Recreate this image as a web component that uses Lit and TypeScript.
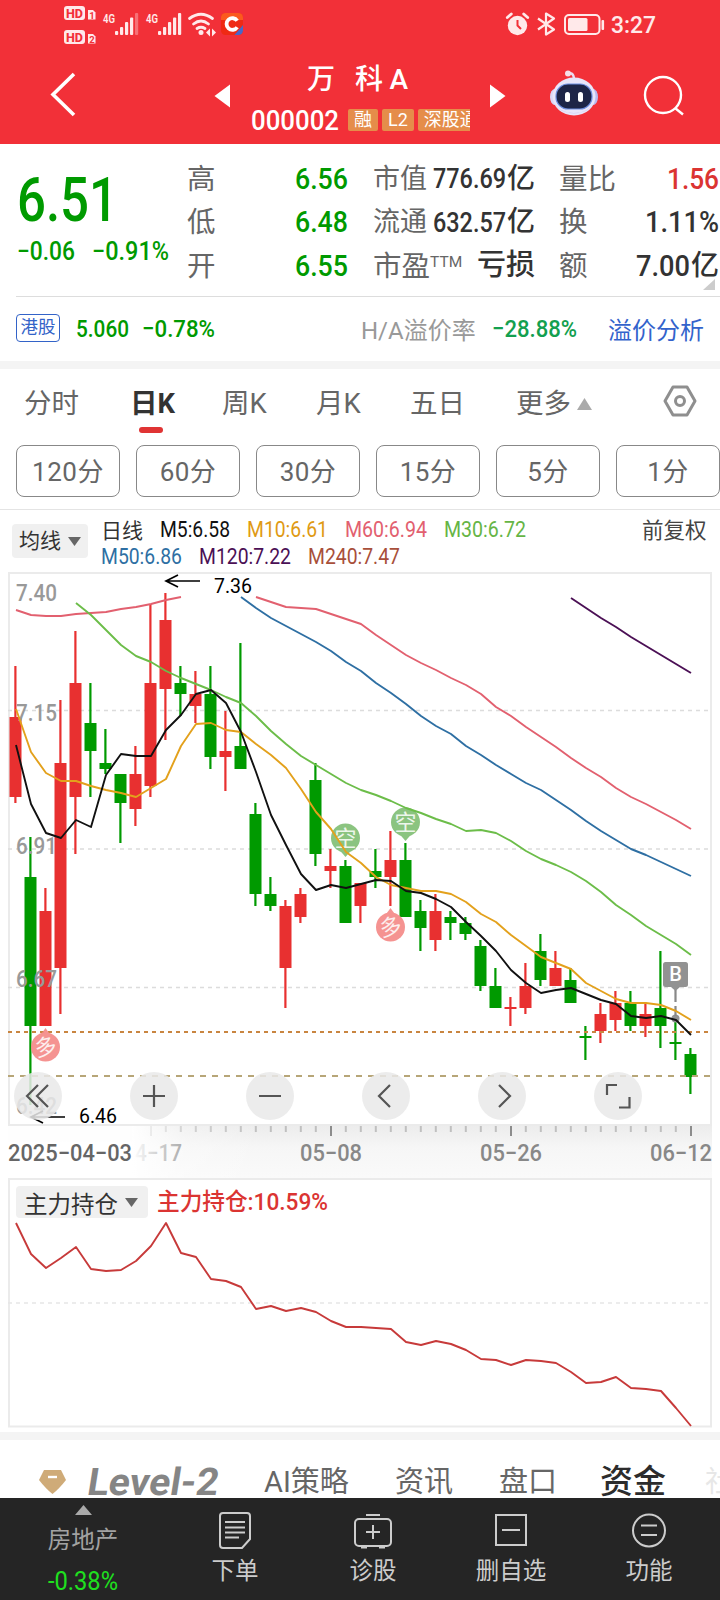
import { LitElement, html, svg, css } from "lit";
import { customElement } from "lit/decorators.js";

/* [up?, high, bodyTop, bodyBottom, low] in page pixels, one entry per trading day */
type Candle = [number, number, number, number, number];
const candles: Candle[] = [
  [1, 666, 717, 797, 803], [0, 837, 877, 1026, 1105], [1, 888, 911, 1026, 1026], [1, 700, 763, 968, 1014],
  [1, 631, 683, 797, 854], [0, 683, 723, 751, 797], [0, 729, 763, 769, 774], [0, 774, 774, 803, 843],
  [1, 746, 774, 809, 826], [1, 604, 683, 786, 797], [1, 593, 620, 689, 740], [0, 666, 683, 694, 716],
  [1, 671, 694, 706, 723], [0, 666, 694, 757, 769], [1, 711, 751, 757, 791], [0, 643, 746, 769, 769],
  [0, 803, 814, 894, 906], [0, 877, 894, 906, 911], [1, 900, 906, 968, 1008], [1, 888, 894, 917, 923],
  [0, 763, 780, 854, 866], [1, 849, 866, 871, 888], [0, 860, 866, 923, 923], [1, 883, 883, 906, 923],
  [0, 849, 871, 877, 888], [1, 831, 860, 877, 906], [0, 843, 860, 917, 917], [0, 900, 911, 928, 951],
  [1, 894, 911, 940, 951], [0, 911, 917, 923, 940], [0, 917, 923, 934, 940], [0, 940, 946, 986, 991],
  [0, 968, 986, 1008, 1008], [1, 997, 1007, 1009, 1026], [1, 963, 986, 1008, 1014], [0, 934, 951, 980, 986],
  [1, 951, 968, 986, 986], [0, 968, 980, 1003, 1003], [0, 1026, 1036, 1038, 1060], [1, 1003, 1014, 1031, 1043],
  [1, 991, 1003, 1020, 1031], [0, 991, 1003, 1026, 1031], [1, 1003, 1014, 1026, 1037], [0, 951, 1008, 1026, 1048],
  [0, 1018, 1042, 1044, 1060], [0, 1048, 1054, 1077, 1094],
];

const m5 = [745, 804, 833, 838, 820, 827, 775, 754, 756, 756, 730, 715, 694, 690, 703, 732, 772, 815, 845, 874, 890, 885, 888, 884, 880, 881, 891, 893, 899, 907, 922, 936, 951, 970, 983, 993, 990, 988, 994, 1000, 1004, 1016, 1018, 1016, 1020, 1035];
const m10 = [709, 752, 773, 781, 781, 786, 790, 793, 797, 788, 779, 746, 724, 723, 730, 732, 744, 755, 768, 789, 812, 829, 852, 863, 877, 885, 888, 891, 891, 894, 902, 914, 922, 935, 946, 957, 963, 969, 983, 991, 999, 1003, 1003, 1005, 1011, 1020];
const m30 = [603, 615, 630, 645, 656, 662, 671, 678, 684, 690, 697, 703, 716, 731, 744, 756, 765, 774, 783, 790, 795, 801, 808, 813, 819, 824, 831, 830, 833, 841, 851, 859, 865, 872, 881, 892, 905, 915, 926, 935, 944, 955];
const m60a = [610, 615, 616, 616, 614, 613, 612, 609, 607, 604, 600, 597];
const m60b = [597, 602, 607, 608, 609, 614, 619, 624, 635, 645, 655, 663, 670, 678, 685, 694, 707, 716, 727, 737, 747, 758, 768, 777, 788, 797, 804, 812, 820, 829];
const m50 = [597, 608, 618, 626, 634, 642, 651, 662, 671, 683, 693, 704, 716, 726, 734, 746, 755, 765, 774, 783, 790, 800, 810, 821, 831, 840, 849, 855, 862, 869, 876];
const m120 = [598, 608, 618, 627, 637, 646, 655, 664, 673];
const holding = [1223, 1254, 1268, 1258, 1247, 1269, 1271, 1270, 1261, 1246, 1223, 1253, 1257, 1279, 1281, 1287, 1309, 1306, 1311, 1308, 1312, 1321, 1327, 1327, 1328, 1329, 1342, 1345, 1341, 1344, 1350, 1359, 1360, 1365, 1360, 1361, 1363, 1372, 1383, 1382, 1377, 1388, 1389, 1391, 1408, 1426];

const path = (ys: number[], from = 0) => ys.map((y, i) => `${16 + 15 * (i + from)},${y}`).join(" ");

const fit = (text: string, w: number, size: number, cls = "") => html`<svg
  class="fit ${cls}" width=${w} height=${size}><text x="0" y=${size / 2 + size * 0.356}
  font-size=${size} textLength=${w} lengthAdjust="spacingAndGlyphs">${text}</text></svg>`;

@customElement("status-bar")
class StatusBar extends LitElement {
  static styles = css`
    :host { display: block; height: 48px; }
    svg { display: block; }
    text { font-family: Roboto, sans-serif; }
  `;
  render() {
    const bars = (x: number, dim: boolean) => [0, 1, 2, 3, 4].map(
      (i) => svg`<rect x=${x + i * 5} y=${[31, 27, 22, 17.5, 13][i]} width="3.2" height=${[4, 8, 13, 17.5, 22][i]} rx="1" fill="#ffe9ea" opacity=${dim && i === 4 ? 0.35 : 1}/>`);
    return html`<svg width="720" height="48" fill="#ffe9ea">
      ${[6, 30].map((y, i) => svg`
        <rect x="64" y=${y} width="21" height="14" rx="3"/>
        <text x="66" y=${y + 11.6} font-size="13" font-weight="800" fill="#f23038" textLength="17" lengthAdjust="spacingAndGlyphs">HD</text>
        <path d=${`M88 ${y + 4}h5l2.500 2.500v7h-7.500z`}/>
        <text x="89.200" y=${y + 12.500} font-size="9.500" font-weight="700" fill="#f23038">${i + 1}</text>`)}
      <text x="103" y="22.500" font-size="13" font-weight="600" textLength="12" lengthAdjust="spacingAndGlyphs">4G</text>
      ${bars(115, true)}
      <text x="146" y="22.500" font-size="13" font-weight="600" textLength="12" lengthAdjust="spacingAndGlyphs">4G</text>
      ${bars(158, false)}
      <g fill="none" stroke="#ffe9ea" stroke-width="2.800" stroke-linecap="round">
        <path d="M189.500 18.500Q201 10 212.500 18.500M193.500 24Q201 18 208.500 24M197 28.500Q201 26 205 28.500"/>
      </g>
      <circle cx="201" cy="32.500" r="2.500"/>
      <path d="M210 28.500v8l-4-4zM212 28.500v8l4-4z"/>
      <rect x="221" y="13" width="22" height="22" rx="4.500" fill="#ef2a14"/>
      <path d="M221 20v-2.500a4.500 4.500 0 0 1 4.500-4.500h13a4.500 4.500 0 0 1 4.500 4.500v2.500z" fill="#fb5a1e"/>
      <path d="M243 25v5.500a4.500 4.500 0 0 1-4.500 4.500h-4z" fill="#4967c9"/>
      <path d="M237.200 20.800a5.800 5.800 0 1 0 0 6.400" fill="none" stroke="#fff" stroke-width="3.800"/>
      <circle cx="517.500" cy="25.500" r="9.700"/>
      <path d="M507.300 17.500l4-3.500M527.700 17.500l-4-3.500" stroke="#ffe9ea" stroke-width="2.800" stroke-linecap="round"/>
      <path d="M517.500 20v5.500l3.500 3.500" fill="none" stroke="#f23038" stroke-width="2"/>
      <path d="M538 18.500L554 29.500L546 34.500V13.500L554 18.500L538 29.500" fill="none" stroke="#ffe9ea" stroke-width="2.200" stroke-linejoin="round"/>
      <rect x="565" y="15" width="34.500" height="19" rx="4" fill="none" stroke="#ffe9ea" stroke-width="2"/>
      <rect x="568" y="18" width="19.500" height="13" rx="1.500"/>
      <rect x="601.500" y="20" width="2.600" height="10" rx="1"/>
      <text x="611" y="33" font-size="23.500" font-weight="500" textLength="45" lengthAdjust="spacingAndGlyphs">3:27</text>
    </svg>`;
  }
}

@customElement("price-chart")
class PriceChart extends LitElement {
  static styles = css`
    :host { display: block; height: 606px; }
    svg { display: block; }
    text { font-family: Roboto, "Noto Sans CJK SC", sans-serif; }
    .axis { fill: #999; font-size: 23px; font-weight: 500; }
    .date { fill: #888; font-size: 23px; font-weight: 500; }
    .first { fill: #666; }
    .line { fill: none; stroke-width: 1.900; stroke-linejoin: round; }
    .mark { fill: #fff; font-size: 22px; text-anchor: middle; opacity: .85; }
    .tool { fill: none; stroke: #555; stroke-width: 2.200; }
  `;
  render() {
    const pin = (x: number, y: number, up: boolean) => svg`
      <g opacity=".92"><circle cx=${x} cy=${y} r="14.500" fill=${up ? "#f58a88" : "#82bf76"}/>
      <path d=${up ? `M${x - 5} ${y - 12}L${x} ${y - 19}L${x + 5} ${y - 12}z` : `M${x - 6} ${y + 12}L${x} ${y + 19}L${x + 6} ${y + 12}z`} fill=${up ? "#f58a88" : "#82bf76"}/></g>
      <text class="mark" x=${x} y=${y + 8} transform=${up ? `rotate(-12 ${x} ${y})` : ""}>${up ? "多" : "空"}</text>`;
    const label = (t: string, y: number) => svg`<text class="axis" x="16" y=${y} textLength="41" lengthAdjust="spacingAndGlyphs">${t}</text>`;
    const date = (t: string, x: number, w = 62) => svg`<text class="date" x=${x} y="1161" textLength=${w} lengthAdjust="spacingAndGlyphs">${t}</text>`;
    return html`<svg width="720" height="606" viewBox="0 572 720 606">
      <defs>
        <linearGradient id="down" x1="0" y1="0" x2="0" y2="1"><stop offset="0" stop-color="#ececec"/><stop offset=".4" stop-color="#f6f6f6"/><stop offset="1" stop-color="#fafafa"/></linearGradient>
        <linearGradient id="side"><stop offset="0" stop-color="#fff"/><stop offset=".15" stop-color="#fff" stop-opacity=".7"/><stop offset=".4" stop-color="#fff" stop-opacity=".3"/><stop offset="1" stop-color="#fff" stop-opacity="0"/></linearGradient>
      </defs>
      <rect x="8" y="1126" width="704" height="52" fill="url(#down)"/>
      ${Array.from({ length: 37 }, (_, k) => k + 9).map((i) => {
        const major = i % 12 === 9;
        return svg`<rect x=${15.5 + 15 * i - (major ? 0.5 : 0.7)} y="1126" width="2" height=${major ? 10 : 6} fill=${major ? (i === 9 ? "#bbb" : "#8c8c8c") : "#c0c0c0"}/>`;
      })}
      ${date("4−17", 135, 47)}${date("05−08", 300)}${date("05−26", 480)}${date("06−12", 650)}
      <rect x="0" y="1126" width="132" height="52" fill="#fff" opacity=".92"/>
      <rect x="132" y="1126" width="130" height="52" fill="url(#side)"/>
      <text class="date first" x="8" y="1161" textLength="124" lengthAdjust="spacingAndGlyphs">2025−04−03</text>
      <rect x="9" y="573" width="702" height="552" fill="#fff" stroke="#ebebeb" stroke-width="2"/>
      <g stroke="#dcdcdc" stroke-width="1.300" stroke-dasharray="4 4">
        <path d="M8 710.500H710M8 849H710M8 987.500H710"/>
      </g>
      ${candles.map(([up, h, a, b, l], i) => {
        const x = 15.5 + 15 * i;
        const c = up ? "#e83030" : "#009a00";
        return svg`<rect x=${x - 1.2} y=${h} width="2.200" height=${l - h} fill=${c}/><rect x=${x - 6} y=${a} width="12" height=${b - a} fill=${c}/>`;
      })}
      <path d="M8 1032H710" stroke="#c98540" stroke-width="2" stroke-dasharray="4 4"/>
      <path d="M8 1076H710" stroke="#b7a678" stroke-width="2" stroke-dasharray="6 6"/>
      ${label("7.40", 601)}${label("7.15", 721)}${label("6.91", 854)}${label("6.67", 987)}${label("6.42", 1114)}
      ${pin(345.5, 838, false)}${pin(405.5, 822, false)}${pin(45.5, 1047, true)}${pin(390.5, 927, true)}
      <polyline class="line" stroke="#e2606f" points=${path(m60a)}/>
      <polyline class="line" stroke="#e2606f" points=${path(m60b, 16)}/>
      <polyline class="line" stroke="#2e6fa3" points=${path(m50, 15)}/>
      <polyline class="line" stroke="#6cbd49" points=${path(m30, 4)}/>
      <polyline class="line" stroke="#4b1055" points=${path(m120, 37)}/>
      <g fill="#929292"><rect x="663" y="962" width="25" height="25" rx="2.500"/><path d="M671 987h9l-4.500 4z"/><circle cx="675.500" cy="1018.500" r="4"/></g>
      <path d="M675.500 990V1016" stroke="#888" stroke-width="2.200" stroke-dasharray="12 4"/>
      <text x="675.500" y="981" text-anchor="middle" fill="#fff" font-size="20" font-weight="500">B</text>
      <polyline class="line" stroke="#e3a11c" points=${path(m10)}/>
      <polyline class="line" stroke="#111" points=${path(m5)}/>
      <g fill="none" stroke="#000" stroke-width="1.700"><path d="M200 581H166M178 575L166 581L178 587M65 1117H31M43 1111L31 1117L43 1123"/></g>
      <text x="214" y="593" font-size="20" textLength="38" lengthAdjust="spacingAndGlyphs">7.36</text>
      <text x="79" y="1123" font-size="20" textLength="38" lengthAdjust="spacingAndGlyphs">6.46</text>
      ${[38, 154, 270, 386, 502, 618].map((x) => svg`<circle cx=${x} cy="1096" r="24" fill="#e9e9e9" opacity=".86"/>`)}
      <g class="tool">
        <path d="M38 1085L27 1096L38 1107M48 1085L37 1096L48 1107"/>
        <path d="M143 1096H165M154 1085V1107M259 1096H281"/>
        <path d="M390 1085L379 1096L390 1107M499 1085L510 1096L499 1107"/>
        <path d="M607 1095V1085H617M619 1107.500H629.500V1097"/>
      </g>
    </svg>`;
  }
}

@customElement("app-root")
class AppRoot extends LitElement {
  static styles = css`
    :host { display: block; width: 720px; height: 1600px; overflow: hidden; background: #fff; color: #333;
      font-family: Roboto, "Noto Sans CJK SC", sans-serif; }
    * { box-sizing: border-box; }
    svg { display: block; flex: none; overflow: visible; }
    .fit { fill: currentColor; font-weight: 500; font-family: Roboto, "Noto Sans CJK SC", sans-serif; }
    .reg { font-weight: 400; }
    .bold { font-weight: 700; }
    .green { color: #009a00; }
    .red { color: #db3432; }
    header { height: 144px; background: #f23038; color: #fff; }
    .bar { display: grid; grid-template-columns: 214px 37px 239px 60px 80px 90px; height: 96px; }
    .bar > svg { align-self: start; }
    .name { font-size: 28px; letter-spacing: 6.500px; line-height: 30px; font-weight: 500; padding: 17px 0 0 56px; white-space: nowrap; }
    .codes { display: flex; align-items: center; margin-top: 14px; height: 22px; width: 219px; overflow: hidden; }
    .tag { flex: none; height: 22px; line-height: 22px; font-size: 18px; background: #e58d4a; border-radius: 2px; margin-right: 4px; padding: 0 6px; white-space: nowrap; }
    .tag:first-of-type { margin-left: 9px; }
    .quote { display: grid; grid-template-columns: 171px 161px 187px 185px; height: 152px; padding-left: 16px; }
    .main { padding: 25px 0 0 1px; }
    .delta { display: flex; gap: 17px; margin-top: 8px; }
    .rows { display: grid; grid-template-rows: repeat(3, 43.500px); padding-top: 12px; font-size: 28.500px; color: #666; line-height: 45px; }
    .row { display: flex; align-items: center; justify-content: space-between; white-space: nowrap; padding-top: 1px; }
    .row > span { position: relative; top: 1px; }
    .row b { font-weight: 500; color: #333; display: flex; align-items: center; gap: 1px; font-size: 28px; }
    .row b.green { color: #009a00; }
    .row b.red { color: #db3432; }
    .row b.loss { font-size: 29px; }
    .c3 { margin-left: 25px; }
    .c3 .cap { font-size: 27px; }
    .c4 { margin-left: 24px; width: 160px; }
    .corner { margin-left: 144px; }
    .ttm { font-size: 15.500px; vertical-align: 9px; line-height: 1; }
    .premium { display: grid; grid-template-columns: 60px 66px 219px 131px 116px 96px; align-items: center; height: 65px; margin-left: 16px; border-top: 1px solid #ddd; font-size: 24px; white-space: nowrap; padding-bottom: 2px; }
    .ratio { color: #999; }
    .jade { color: #13a04f; }
    .link { color: #3363cc; }
    .hk { width: 44px; height: 28px; border: 1px solid #3363c8; border-radius: 4px; color: #3363c8; font-size: 17.500px; line-height: 25px; text-align: center; }
    .gap { height: 8px; background: #f4f4f4; }
    .tabs { display: grid; grid-template-columns: 106px 92px 94px 94px 106px 147px 81px; height: 76px; padding-left: 24px; font-size: 27.500px; color: #666; line-height: 69px; }
    .tabs > * { white-space: nowrap; }
    .on { font-weight: 700; color: #333; }
    .on::after { content: ""; display: block; width: 24px; height: 6px; border-radius: 3px; background: #e03434; margin: -11px 0 0 9px; }
    .more { display: flex; align-items: center; gap: 6px; height: 69px; }
    .mins { display: flex; gap: 16px; padding: 0 0 12px 16px; height: 65px; width: 736px; border-bottom: 1px solid #e4e4e4; }
    .mins > span { width: 104px; height: 52px; border: 1px solid #888; border-radius: 8px; font-size: 26px; letter-spacing: .5px; line-height: 52px; text-align: center; color: #666; flex: none; }
    .legend { display: grid; grid-template-columns: 89px 541px 77px; height: 62px; padding-left: 12px; }
    .pick { display: flex; align-items: center; background: #f0f0f0; border-radius: 4px; color: #333; white-space: nowrap; }
    .ma { width: 76px; height: 34px; margin-top: 14px; padding-left: 7px; gap: 7px; font-size: 21px; line-height: 30px; }
    .lines { display: grid; grid-template-rows: 28px 27px; padding-top: 5px; }
    .lines > div { display: flex; align-items: center; gap: 17px; font-size: 21px; }
    .k5 { color: #111; } .k10 { color: #e09a14; } .k60 { color: #e2606f; } .k30 { color: #66b545; }
    .k50 { color: #2e6fa3; } .k120 { color: #4b1055; } .k240 { color: #a84f3a; }
    .adj { font-size: 21.500px; line-height: 42px; color: #444; }
    .panel { position: relative; height: 254px; }
    .head { position: absolute; top: 8px; left: 16px; display: flex; align-items: center; gap: 9px; }
    .hold { width: 132px; height: 32px; padding: 1px 0 0 8px; gap: 7px; font-size: 23.500px; }
    .sections { display: grid; grid-template-columns: 47px 178px 131px 104px 101px 105px 40px; height: 58px; padding-left: 39px; align-items: center; font-size: 29px; color: #666; white-space: nowrap; overflow: hidden; width: 720px; padding-top: 23px; line-height: 38px; }
    .level { color: #858585; }
    .funds { font-size: 33px; font-weight: 500; color: #2c2c2c; }
    .faint { opacity: .15; }
    nav { display: grid; grid-template-columns: 166px repeat(4, 138px); height: 102px; background: #252525; color: #ccc; font-size: 23.500px; line-height: 30px; }
    nav > div { display: flex; flex-direction: column; align-items: center; padding-top: 13px; gap: 5px; }
    nav > .sector { color: #a2a2a2; padding-top: 7px; gap: 10px; }
    .drop { color: #1fe01f; margin-top: 4px; }
    .ico { fill: none; stroke: #ccc; stroke-width: 2; }
  `;

  render() {
    const tri = (w: number, h: number, up: boolean, c: string) =>
      html`<svg width=${w} height=${h}><path fill=${c} d=${up ? `M0 ${h}L${w / 2} 0L${w} ${h}z` : `M0 0H${w}L${w / 2} ${h}z`}/></svg>`;
    return html`
      <header>
        <status-bar></status-bar>
        <div class="bar">
          <svg width="214" height="80"><path d="M74 26L53 46.500L74 67" fill="none" stroke="#fff" stroke-width="3.600"/></svg>
          <svg width="37" height="80"><path d="M16 36.500V59.500L.5 48z" fill="#fff"/></svg>
          <div>
            <div class="name">万 科A</div>
            <div class="codes">${fit("000002", 88, 27)}
              <span class="tag">融</span><span class="tag">L2</span><span class="tag">深股通</span></div>
          </div>
          <svg width="60" height="80"><path d="M0 36.500V59.500L15.500 48z" fill="#fff"/></svg>
          <svg width="80" height="80"><g transform="translate(0 -1)">
              <path d="M17 27q7-3 7 6" fill="none" stroke="#e9dcf2" stroke-width="2.400"/>
              <circle cx="18" cy="26.500" r="3" fill="#f6dfe8"/>
              <ellipse cx="5" cy="50" rx="5" ry="8" fill="#d9d6f6"/><ellipse cx="43" cy="50" rx="5" ry="8" fill="#b9baf0"/>
              <ellipse cx="24" cy="49.500" rx="21.500" ry="19" fill="#e8e6fa"/>
              <path d="M5 56a20 15 0 0 0 38 0q-4 10-19 10T5 56z" fill="#b8b6ee"/>
              <rect x="6" y="37" width="36" height="25" rx="12" fill="#1d2547" stroke="#6d8ee0" stroke-width="1.200"/>
              <rect x="15" y="45" width="5" height="10" rx="2.500" fill="#fff"/><rect x="28" y="45" width="5" height="10" rx="2.500" fill="#fff"/>
            </g>
          </svg>
          <svg width="90" height="80"><g fill="none" stroke="#fff" stroke-width="2.400"><circle cx="33" cy="47" r="18"/><path d="M45 60L53 66.500"/></g></svg>
        </div>
      </header>

      <section class="quote">
        <div class="main green">
          ${fit("6.51", 101, 61)}
          <div class="delta">${fit("−0.06", 58, 26)}${fit("−0.91%", 77, 26)}</div>
        </div>
        <div class="rows">
          <div class="row"><span>高</span><b class="green">${fit("6.56", 53, 29.5)}</b></div>
          <div class="row"><span>低</span><b class="green">${fit("6.48", 53, 29.5)}</b></div>
          <div class="row"><span>开</span><b class="green">${fit("6.55", 53, 29.5)}</b></div>
        </div>
        <div class="rows c3">
          <div class="row"><span class="cap">市值</span><b>${fit("776.69", 73, 28.5)}<span>亿</span></b></div>
          <div class="row"><span class="cap">流通</span><b>${fit("632.57", 73, 28.5)}<span>亿</span></b></div>
          <div class="row"><span>市盈<span class="ttm">TTM</span></span><b class="loss">亏损</b></div>
        </div>
        <div class="rows c4">
          <div class="row"><span>量比</span><b class="red">${fit("1.56", 52, 29.5)}</b></div>
          <div class="row"><span>换</span><b>${fit("1.11%", 74, 29.5)}</b></div>
          <div class="row"><span>额</span><b>${fit("7.00", 54, 29.5)}<span>亿</span></b></div>
          <svg class="corner" width="12" height="12" viewBox="0 0 12 12"><path d="M12-8V3H0z" fill="#ccc"/></svg>
        </div>
      </section>
      <section class="premium">
        <div class="hk">港股</div>
        <span class="green">${fit("5.060", 53, 24.5)}</span>
        <span class="green">${fit("−0.78%", 73, 24.5)}</span>
        <span class="ratio">H/A溢价率</span>
        <span class="jade">${fit("−28.88%", 85, 24.5)}</span>
        <span class="link">溢价分析</span>
      </section>
      <div class="gap"></div>

      <section class="tabs">
        <span>分时</span><span class="on">日K</span><span>周K</span><span>月K</span><span>五日</span>
        <span class="more">更多 ${tri(15, 12, true, "#aaa")}</span>
        <svg width="34" height="66"><g fill="none" stroke="#8f8f8f" stroke-width="3" stroke-linejoin="round"><path d="M10 18H24L32 32L24 46H10L2 32z"/><circle cx="17" cy="32" r="4.500"/></g></svg>
      </section>
      <section class="mins">
        ${["120分", "60分", "30分", "15分", "5分", "1分"].map((m) => html`<span>${m}</span>`)}
      </section>

      <section class="legend">
        <div class="pick ma">均线${tri(13, 9, false, "#666")}</div>
        <div class="lines">
          <div><span>日线</span>
            <span class="k5">${fit("M5:6.58", 70, 22.5, "reg")}</span>
            <span class="k10">${fit("M10:6.61", 81, 22.5, "reg")}</span>
            <span class="k60">${fit("M60:6.94", 82, 22.5, "reg")}</span>
            <span class="k30">${fit("M30:6.72", 82, 22.5, "reg")}</span></div>
          <div>
            <span class="k50">${fit("M50:6.86", 81, 22.5, "reg")}</span>
            <span class="k120">${fit("M120:7.22", 92, 22.5, "reg")}</span>
            <span class="k240">${fit("M240:7.47", 92, 22.5, "reg")}</span></div>
        </div>
        <div class="adj">前复权</div>
      </section>

      <price-chart></price-chart>

      <section class="panel">
        <svg width="720" height="254" viewBox="0 1178 720 254">
          <rect x="9" y="1179" width="702" height="247.500" fill="#fff" stroke="#ebebeb" stroke-width="2"/>
          <path d="M8 1303H710" stroke="#e6e6e6" stroke-width="1.600" stroke-dasharray="4 4"/>
          <polyline points=${path(holding)} fill="none" stroke="#c73a3a" stroke-width="1.900" stroke-linejoin="round"/>
        </svg>
        <div class="head">
          <div class="pick hold">主力持仓${tri(13, 9, false, "#666")}</div>
          <span class="red">${fit("主力持仓:10.59%", 171, 23.5)}</span>
        </div>
      </section>
      <div class="gap"></div>

      <section class="sections">
        <svg width="27" height="24"><path d="M5 0H22L27 10Q20 19 13.500 24Q7 19 0 10z" fill="#cfab78"/><path d="M9 7H18" stroke="#fff" stroke-width="2.400"/></svg>
        <span class="level"><svg class="fit bold" width="134" height="38"><text transform="skewX(-9)" x="5" y="32" font-size="38" textLength="131" lengthAdjust="spacingAndGlyphs">Level-2</text></svg></span>
        <span>AI策略</span><span>资讯</span><span>盘口</span><span class="funds">资金</span><span class="faint">社</span>
      </section>

      <nav>
        <div class="sector">${tri(17, 10, true, "#aaa")}<span>房地产</span>
          <span class="drop">${fit("-0.38%", 70, 25, "reg")}</span></div>
        <div><svg class="ico" width="34" height="40"><path d="M5 2H29Q32 2 32 5V28L24 37H5Q2 37 2 34V5Q2 2 5 2zM7 11H27M7 16.500H27M7 21.500H27M7 26.500H21"/></svg>下单</div>
        <div><svg class="ico" width="40" height="40"><rect x="2" y="8" width="36" height="27" rx="4"/><path d="M13 4H27M20 14V28M13 21H27M8 36.500H14M26 36.500H32"/></svg>诊股</div>
        <div><svg class="ico" width="34" height="40"><path d="M2 4H32V34H2zM8 19H26"/></svg>删自选</div>
        <div><svg class="ico" width="36" height="40"><circle cx="18" cy="19.500" r="16"/><path d="M10 14.500H26M10 24H26"/></svg>功能</div>
      </nav>
    `;
  }
}
